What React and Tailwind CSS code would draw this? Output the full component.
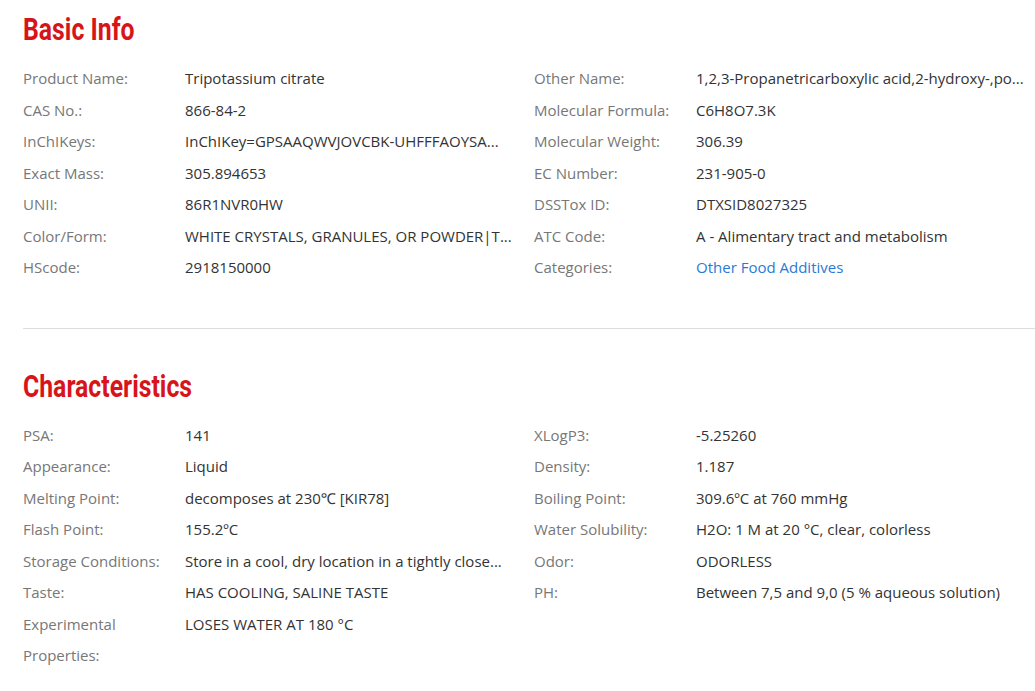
import React from "react";

const basicLeft = [
  ["Product Name:", "Tripotassium citrate"],
  ["CAS No.:", "866-84-2"],
  ["InChIKeys:", "InChIKey=GPSAAQWVJOVCBK-UHFFFAOYSA..."],
  ["Exact Mass:", "305.894653"],
  ["UNII:", "86R1NVR0HW"],
  ["Color/Form:", "WHITE CRYSTALS, GRANULES, OR POWDER|T..."],
  ["HScode:", "2918150000"],
];
const basicRight = [
  ["Other Name:", "1,2,3-Propanetricarboxylic acid,2-hydroxy-,po..."],
  ["Molecular Formula:", "C6H8O7.3K"],
  ["Molecular Weight:", "306.39"],
  ["EC Number:", "231-905-0"],
  ["DSSTox ID:", "DTXSID8027325"],
  ["ATC Code:", "A - Alimentary tract and metabolism"],
  ["Categories:", "Other Food Additives", true],
];
const charLeft = [
  ["PSA:", "141"],
  ["Appearance:", "Liquid"],
  ["Melting Point:", "decomposes at 230℃ [KIR78]"],
  ["Flash Point:", "155.2ºC"],
  ["Storage Conditions:", "Store in a cool, dry location in a tightly close..."],
  ["Taste:", "HAS COOLING, SALINE TASTE"],
  ["Experimental Properties:", "LOSES WATER AT 180 °C"],
];
const charRight = [
  ["XLogP3:", "-5.25260"],
  ["Density:", "1.187"],
  ["Boiling Point:", "309.6ºC at 760 mmHg"],
  ["Water Solubility:", "H2O: 1 M at 20 °C, clear, colorless"],
  ["Odor:", "ODORLESS"],
  ["PH:", "Between 7,5 and 9,0 (5 % aqueous solution)"],
];

function Rows({ rows }) {
  return (
    <div className="flex flex-col">
      {rows.map(([k, v, link]) => (
        <div key={k} className="flex leading-[31.5px]">
          <div className="w-[162px] shrink-0 pr-3 text-[#777]">{k}</div>
          <div
            className={
              "whitespace-nowrap " + (link ? "text-[#2a7ad5]" : "text-[#333]")
            }
          >
            {v}
          </div>
        </div>
      ))}
    </div>
  );
}

function Heading({ children }) {
  return (
    <h2
      className="inline-block origin-left scale-x-[0.8] text-[31px] font-bold leading-[40px] text-[#d7141a]"
      style={{ fontFamily: "Roboto, 'Liberation Sans', sans-serif" }}
    >
      {children}
    </h2>
  );
}

export default function App() {
  return (
    <div
      className="w-[1035px] h-[691px] overflow-hidden bg-white pl-[23px] pt-[10px] text-[15px]"
      style={{ fontFamily: "'Open Sans', 'Noto Sans', sans-serif" }}
    >
      <Heading>Basic Info</Heading>
      <div className="mt-[13px] grid grid-cols-[511px_1fr]">
        <Rows rows={basicLeft} />
        <Rows rows={basicRight} />
      </div>
      <div className="mt-[44px] h-px w-[1100px] bg-[#dddddd]" />
      <div className="mt-[38px]">
        <Heading>Characteristics</Heading>
      </div>
      <div className="mt-[13px] grid grid-cols-[511px_1fr]">
        <Rows rows={charLeft} />
        <Rows rows={charRight} />
      </div>
    </div>
  );
}
